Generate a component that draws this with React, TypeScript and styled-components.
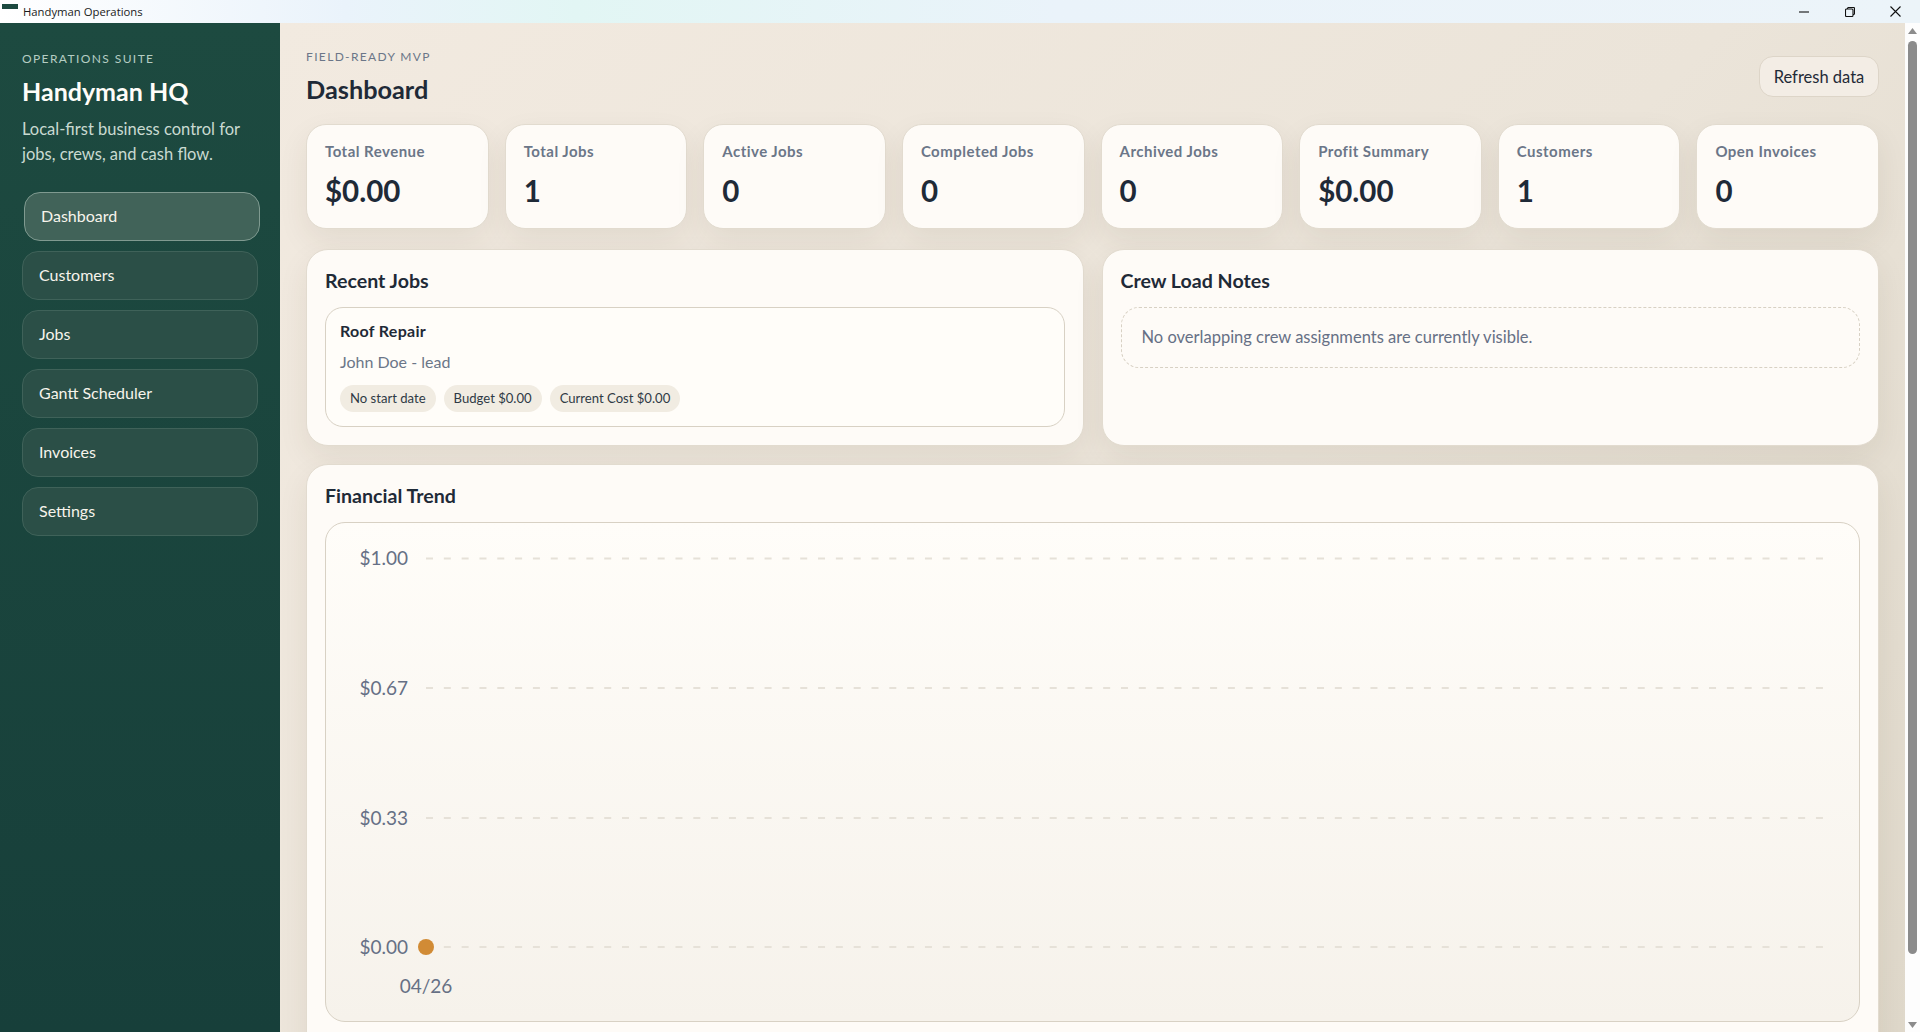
import React from "react"
import styled, { createGlobalStyle } from "styled-components"

const FONT = `Lato, "Noto Sans", "Liberation Sans", sans-serif`

const GlobalStyle = createGlobalStyle`
  html, body, #root {
    margin: 0;
    height: 100%;
  }
  body {
    overflow: hidden;
    font-family: ${FONT};
    color: #1f2a37;
  }
  * {
    box-sizing: border-box;
  }
`

const Shell = styled.div`
  height: 100vh;
  display: flex;
  flex-direction: column;
  overflow: hidden;
`
const TitleBar = styled.div`
  height: 23px;
  flex: none;
  display: flex;
  align-items: center;
  padding-right: 2px;
  background: linear-gradient(90deg, #ffffff 0%, #eaf3fb 18%, #e2f6f4 30%, #eaf3fa 55%, #ecf4f9 100%);
`
const AppIcon = styled.svg`
  width: 16px;
  height: 16px;
  margin: 0 5px 0 2px;
  flex: none;
`
const WindowName = styled.span`
  font-family: "Open Sans", "Noto Sans", sans-serif;
  font-size: 11.3px;
  color: #1a1a1a;
  flex: 1;
`
const WindowButton = styled.div`
  width: 45.5px;
  height: 23px;
  display: flex;
  align-items: center;
  justify-content: center;
`
const Body = styled.div`
  flex: 1;
  min-height: 0;
  display: flex;
`
const Sidebar = styled.aside`
  width: 280px;
  flex: none;
  padding: 28px 22px 0;
  background: linear-gradient(180deg, #1d4a40 0%, #173f3a 100%);
`
const Suite = styled.div`
  font-size: 12px;
  line-height: 15px;
  letter-spacing: 1.4px;
  color: #b5cdc3;
`
const Brand = styled.h1`
  margin: 10px 0 0;
  font-size: 25px;
  line-height: 30px;
  font-weight: 700;
  color: #fffdf9;
`
const Blurb = styled.p`
  margin: 11px 0 0;
  font-size: 16.5px;
  line-height: 25px;
  color: #c9dad1;
`
const Nav = styled.nav`
  margin-top: 25px;
  display: flex;
  flex-direction: column;
  gap: 10px;
`
const NavItem = styled.div<{ $active?: boolean }>`
  height: 49px;
  display: flex;
  align-items: center;
  padding: 0 0 2px 16px;
  border-radius: 16px;
  font-size: 16px;
  color: #f7f4ec;
  border: 1px solid ${(p) => (p.$active ? "#7f9a90" : "#3f6259")};
  background: ${(p) => (p.$active ? "#416359" : "#2b4f47")};
  transform: ${(p) => (p.$active ? "translateX(2px)" : "none")};
`
const Main = styled.main`
  flex: 1;
  min-width: 0;
  overflow: hidden;
  padding: 26px 26px 0;
  display: flex;
  flex-direction: column;
  background: linear-gradient(135deg, #f2eae0 0%, #ebe4d9 55%, #dfd8ca 100%);
`
const Header = styled.header`
  display: flex;
  justify-content: space-between;
  align-items: flex-start;
  height: 75px;
  flex: none;
`
const Eyebrow = styled.div`
  font-size: 12px;
  line-height: 15px;
  letter-spacing: 1.35px;
  color: #6b7688;
`
const PageTitle = styled.h2`
  margin: 10px 0 0;
  font-size: 25.3px;
  line-height: 30px;
  font-weight: 700;
  color: #1f2a37;
`
const RefreshButton = styled.button`
  margin-top: 7px;
  width: 120px;
  height: 41px;
  padding: 0;
  font-family: ${FONT};
  font-size: 16.5px;
  color: #1f2a37;
  background: #f3ede5;
  border: 1px solid #ddd5c8;
  border-radius: 14px;
`
const StatGrid = styled.section`
  display: grid;
  grid-template-columns: repeat(8, 1fr);
  gap: 16px;
  flex: none;
`
const Surface = styled.div`
  background: #fefbf7;
  border: 1px solid #e2dbcf;
  box-shadow: 0 12px 30px rgba(60, 50, 30, 0.08);
`
const StatCard = styled(Surface)`
  height: 105px;
  border-radius: 20px;
  padding: 17px 18px;
`
const StatLabel = styled.div`
  font-size: 15px;
  line-height: 18px;
  font-weight: 700;
  letter-spacing: 0.48px;
  color: #6b7688;
`
const StatValue = styled.div`
  margin-top: 13px;
  font-size: 29.5px;
  line-height: 36px;
  font-weight: 700;
  color: #1f2a37;
`
const PanelRow = styled.section`
  margin-top: 20px;
  display: grid;
  grid-template-columns: 1fr 1fr;
  gap: 18px;
  flex: none;
`
const Panel = styled(Surface)`
  border-radius: 22px;
  padding: 19px 18px 18px;
`
const PanelTitle = styled.h3`
  margin: 0 0 14px;
  height: 24px;
  font-size: 19.6px;
  line-height: 24px;
  font-weight: 700;
  color: #1f2a37;
`
const JobCard = styled.div`
  height: 120px;
  padding: 13px 14px;
  border: 1px solid #d8d1c4;
  border-radius: 18px;
  background: #fffdf9;
`
const JobName = styled.div`
  font-size: 16px;
  line-height: 20px;
  font-weight: 700;
  letter-spacing: 0.3px;
  color: #1f2a37;
`
const JobOwner = styled.div`
  margin-top: 11px;
  font-size: 16px;
  line-height: 20px;
  color: #6b7688;
`
const Pills = styled.div`
  margin-top: 13px;
  display: flex;
  gap: 8px;
`
const Pill = styled.span`
  height: 27px;
  padding: 0 10px 1px;
  display: flex;
  align-items: center;
  border-radius: 14px;
  font-size: 13.1px;
  color: #2f3a45;
  background: #f1ece2;
`
const EmptyNote = styled.div`
  height: 61px;
  display: flex;
  align-items: center;
  padding: 0 0 1px 20px;
  border: 1px dashed #d8d1c4;
  border-radius: 18px;
  font-size: 16.5px;
  color: #667085;
`
const ChartPanel = styled(Panel)`
  margin-top: 18px;
  flex: none;
`
const ChartBox = styled.div`
  height: 500px;
  margin-bottom: 18px;
  border: 1px solid #d8d1c4;
  border-radius: 20px;
  background: linear-gradient(180deg, #fffdf9 0%, #f6f2eb 100%);
`
const ChartSvg = styled.svg`
  display: block;
  width: 100%;
  height: 100%;
  font-family: ${FONT};
`
const Scrollbar = styled.div`
  width: 15px;
  flex: none;
  background: #fdfdfd;
  display: flex;
  flex-direction: column;
  align-items: center;
  padding: 5px 0 4px;
`
const Thumb = styled.div`
  width: 9px;
  height: 913px;
  margin: 7px 0 auto;
  border-radius: 5px;
  background: #8b8b8b;
`

const stats = [
  { label: "Total Revenue", value: "$0.00" },
  { label: "Total Jobs", value: "1" },
  { label: "Active Jobs", value: "0" },
  { label: "Completed Jobs", value: "0" },
  { label: "Archived Jobs", value: "0" },
  { label: "Profit Summary", value: "$0.00" },
  { label: "Customers", value: "1" },
  { label: "Open Invoices", value: "0" },
]
const navItems = ["Dashboard", "Customers", "Jobs", "Gantt Scheduler", "Invoices", "Settings"]
const gridLines = [
  { label: "$1.00", y: 35.5 },
  { label: "$0.67", y: 165 },
  { label: "$0.33", y: 295 },
  { label: "$0.00", y: 424 },
]

const TrendChart = () => (
  <ChartSvg viewBox="0 0 1533 498" preserveAspectRatio="xMinYMin meet">
    {gridLines.map((line) => (
      <g key={line.label}>
        <line x1="100" x2="1497" y1={line.y} y2={line.y} stroke="#e6e1d8" strokeWidth="2" strokeDasharray="7 10.82" />
        <text x="82" y={line.y + 6.5} textAnchor="end" fontSize="19" fill="#667085">
          {line.label}
        </text>
      </g>
    ))}
    <circle cx="100" cy="424" r="8" fill="#d18b35" />
    <text x="100" y="470" textAnchor="middle" fontSize="19" fill="#667085">
      04/26
    </text>
  </ChartSvg>
)

export default function App() {
  return (
    <Shell>
      <GlobalStyle />
      <TitleBar>
        <AppIcon viewBox="0 0 16 16">
          <rect x="0" y="0" width="16" height="5" fill="#1d4a40" />
        </AppIcon>
        <WindowName>Handyman Operations</WindowName>
        <WindowButton>
          <svg width="10" height="10" viewBox="0 0 10 10">
            <path d="M0 5h10" stroke="#111" strokeWidth="1.1" />
          </svg>
        </WindowButton>
        <WindowButton>
          <svg width="10" height="10" viewBox="0 0 10 10" fill="none" stroke="#111" strokeWidth="1.1">
            <rect x="0.5" y="2" width="7.5" height="7.5" rx="1" />
            <path d="M2.5 2V1.5a1 1 0 0 1 1-1h5a1 1 0 0 1 1 1v5a1 1 0 0 1-1 1H8" />
          </svg>
        </WindowButton>
        <WindowButton>
          <svg width="11" height="11" viewBox="0 0 11 11">
            <path d="M0.5 0.5l10 10M10.5 0.5l-10 10" stroke="#111" strokeWidth="1.1" />
          </svg>
        </WindowButton>
      </TitleBar>
      <Body>
        <Sidebar>
          <Suite>OPERATIONS SUITE</Suite>
          <Brand>Handyman HQ</Brand>
          <Blurb>
            Local-first business control for
            <br />
            jobs, crews, and cash flow.
          </Blurb>
          <Nav>
            {navItems.map((item) => (
              <NavItem key={item} $active={item === "Dashboard"}>
                {item}
              </NavItem>
            ))}
          </Nav>
        </Sidebar>
        <Main>
          <Header>
            <div>
              <Eyebrow>FIELD-READY MVP</Eyebrow>
              <PageTitle>Dashboard</PageTitle>
            </div>
            <RefreshButton>Refresh data</RefreshButton>
          </Header>
          <StatGrid>
            {stats.map((stat) => (
              <StatCard key={stat.label}>
                <StatLabel>{stat.label}</StatLabel>
                <StatValue>{stat.value}</StatValue>
              </StatCard>
            ))}
          </StatGrid>
          <PanelRow>
            <Panel>
              <PanelTitle>Recent Jobs</PanelTitle>
              <JobCard>
                <JobName>Roof Repair</JobName>
                <JobOwner>John Doe - lead</JobOwner>
                <Pills>
                  <Pill>No start date</Pill>
                  <Pill>Budget $0.00</Pill>
                  <Pill>Current Cost $0.00</Pill>
                </Pills>
              </JobCard>
            </Panel>
            <Panel>
              <PanelTitle>Crew Load Notes</PanelTitle>
              <EmptyNote>No overlapping crew assignments are currently visible.</EmptyNote>
            </Panel>
          </PanelRow>
          <ChartPanel>
            <PanelTitle>Financial Trend</PanelTitle>
            <ChartBox>
              <TrendChart />
            </ChartBox>
          </ChartPanel>
        </Main>
        <Scrollbar>
          <svg width="9" height="6" viewBox="0 0 9 6">
            <path d="M4.5 0L9 6H0z" fill="#8b8b8b" />
          </svg>
          <Thumb />
          <svg width="9" height="6" viewBox="0 0 9 6">
            <path d="M0 0h9L4.5 6z" fill="#8b8b8b" />
          </svg>
        </Scrollbar>
      </Body>
    </Shell>
  )
}
